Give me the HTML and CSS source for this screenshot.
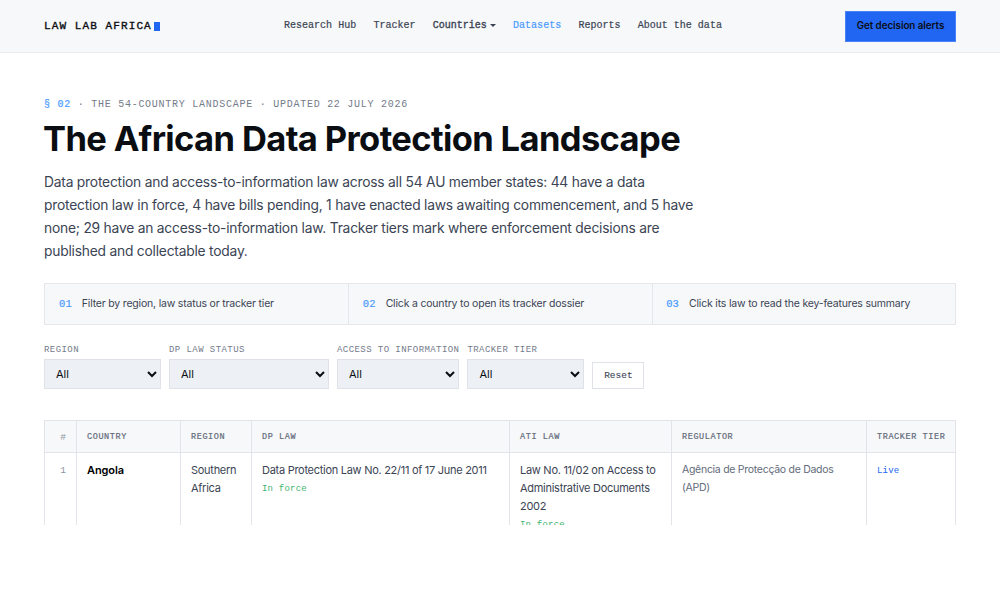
FILE: index.html
```html
<!DOCTYPE html>
<html lang="en">
<head>
    <meta charset="UTF-8">
    <title>The African Data Protection Landscape</title>
    <link rel="stylesheet" href="styles.css">
</head>
<body>
    <header class="site-header">
        <a class="brand" href="#">LAW LAB AFRICA<span class="brand-mark"></span></a>
        <nav class="site-nav">
            <a href="#">Research Hub</a>
            <a href="#">Tracker</a>
            <a class="has-menu" href="#">Countries<span class="caret"></span></a>
            <a class="active" href="#">Datasets</a>
            <a href="#">Reports</a>
            <a href="#">About the data</a>
        </nav>
        <a class="cta" href="#">Get decision alerts</a>
    </header>

    <main>
        <p class="eyebrow"><span>§ 02</span> · THE 54-COUNTRY LANDSCAPE · UPDATED 22 JULY 2026</p>
        <h1>The African Data Protection Landscape</h1>
        <p class="lead">
            Data protection and access-to-information law across all 54 AU member states: 44 have a data<br>
            protection law in force, 4 have bills pending, 1 have enacted laws awaiting commencement, and 5 have<br>
            none; 29 have an access-to-information law. Tracker tiers mark where enforcement decisions are<br>
            published and collectable today.
        </p>

        <div class="steps">
            <div class="step"><span class="num">01</span><span>Filter by region, law status or tracker tier</span></div>
            <div class="step"><span class="num">02</span><span>Click a country to open its tracker dossier</span></div>
            <div class="step"><span class="num">03</span><span>Click its law to read the key-features summary</span></div>
        </div>

        <form class="filters">
            <label class="filter region">REGION
                <select><option>All</option></select>
            </label>
            <label class="filter status">DP LAW STATUS
                <select><option>All</option></select>
            </label>
            <label class="filter access">ACCESS TO INFORMATION
                <select><option>All</option></select>
            </label>
            <label class="filter tier">TRACKER TIER
                <select><option>All</option></select>
            </label>
            <button type="reset">Reset</button>
        </form>

        <div class="table-wrap">
            <table>
                <colgroup>
                    <col class="c-num"><col class="c-country"><col class="c-region"><col class="c-dp"><col class="c-ati"><col class="c-reg"><col class="c-tier">
                </colgroup>
                <thead>
                    <tr>
                        <th class="idx">#</th>
                        <th>COUNTRY</th>
                        <th>REGION</th>
                        <th>DP LAW</th>
                        <th>ATI LAW</th>
                        <th>REGULATOR</th>
                        <th>TRACKER TIER</th>
                    </tr>
                </thead>
                <tbody>
                    <tr>
                        <td class="idx">1</td>
                        <td class="country">Angola</td>
                        <td>Southern Africa</td>
                        <td>Data Protection Law No. 22/11 of 17 June 2011<span class="in-force">In force</span></td>
                        <td>Law No. 11/02 on Access to<br>Administrative Documents<br>2002<span class="in-force">In force</span></td>
                        <td class="regulator">Agência de Protecção de Dados<br>(APD)</td>
                        <td class="live">Live</td>
                    </tr>
                </tbody>
            </table>
        </div>
    </main>
</body>
</html>
```
FILE: styles.css
```css
* { box-sizing: border-box; }
body {
    font-family: Inter, 'Liberation Sans', sans-serif;
    margin: 0;
    background: #fff;
    color: #3b4454;
}
a { color: inherit; text-decoration: none; }
.brand, .site-nav, .eyebrow, .num, .filter, button, th, .idx, .in-force, .live {
    font-family: 'Liberation Mono', monospace;
}
.site-header {
    display: flex;
    align-items: center;
    height: 53px;
    padding: 0 44px;
    background: #f7f8fa;
    border-bottom: 1px solid #e9ebef;
}
.brand {
    display: flex;
    align-items: center;
    width: 240px;
    color: #0a0d12;
    font-size: 11px;
    letter-spacing: 1.1px;
    -webkit-text-stroke: 0.35px;
}
.brand-mark {
    width: 6px;
    height: 9px;
    margin-left: 2.5px;
    background: #2166f3;
}
.site-nav {
    display: flex;
    gap: 17.2px;
    margin-top: -1px;
    font-size: 10px;
    letter-spacing: 0.015px;
    white-space: nowrap;
    -webkit-text-stroke: 0.2px;
}
.has-menu { display: flex; align-items: center; -webkit-text-stroke: 0.35px; }
.caret {
    margin-left: 3px;
    border: 3px solid transparent;
    border-top: 3px solid #3b4454;
    border-bottom: 0;
}
.active { color: #4a9aff; }
.cta {
    width: 111px;
    height: 31px;
    margin-left: auto;
    background: #2166f3;
    border: 1px solid #4a83f5;
    color: #0a0d12;
    font-size: 9.8px;
    font-weight: 600;
    line-height: 28px;
    text-align: center;
    white-space: nowrap;
    letter-spacing: -0.05px;
}

main { padding: 45px 44px 0; }
.eyebrow {
    margin: 0;
    color: #747b8a;
    font-size: 10px;
    line-height: 14px;
    letter-spacing: 0.74px;
}
.eyebrow span, .num { color: #4a9aff; -webkit-text-stroke: 0.2px; }
h1 {
    margin: 6px 0 0 -1px;
    color: #0a0d12;
    font-size: 34.5px;
    font-weight: 650;
    line-height: 42px;
    letter-spacing: -0.62px;
    white-space: nowrap;
}
.lead {
    margin: 11px 0 19.5px;
    font-size: 13.8px;
    line-height: 23.1px;
    letter-spacing: -0.21px;
    white-space: nowrap;
}

.steps {
    display: grid;
    grid-template-columns: repeat(3, 1fr);
    height: 42px;
    background: #f7f8fa;
    border: 1px solid #e5e7eb;
}
.step {
    display: flex;
    align-items: center;
    gap: 10px;
    padding-left: 14px;
    font-size: 10.5px;
    letter-spacing: -0.19px;
    white-space: nowrap;
}
.step + .step { padding-left: 13.5px; border-left: 1px solid #e5e7eb; }
.num { font-size: 10.5px; letter-spacing: 0.1px; }

.filters {
    display: flex;
    align-items: flex-end;
    gap: 8px;
    margin-top: 18px;
}
.filter {
    display: flex;
    flex-direction: column;
    gap: 3px;
    color: #747b8a;
    font-size: 9px;
    line-height: 12px;
    letter-spacing: 0.43px;
    white-space: nowrap;
}
.filters { margin-top: 19px; }
.region { width: 117px; }
.status { width: 160px; }
.access { width: 122.4px; }
.tier { width: 117px; }
select {
    width: 100%;
    height: 30px;
    padding: 0 0 0 7px;
    background: #edf0f5;
    border: 1px solid #dfe2e8;
    border-radius: 0;
    color: #0a0d12;
    font-family: Inter, sans-serif;
    font-size: 11px;
}
button {
    width: 52px;
    height: 27px;
    padding: 0;
    background: #fff;
    border: 1px solid #dfe2e8;
    color: #3b4454;
    font-size: 9.5px;
    -webkit-text-stroke: 0.1px;
}

/* only the top of the list shows */
.table-wrap {
    height: 105px;
    margin-top: 31px;
    overflow: hidden;
}
table {
    width: 911.5px;
    table-layout: fixed;
    border-collapse: collapse;
    border: 1px solid #e2e4e9;
}
.c-num { width: 32px; }
.c-country { width: 104px; }
.c-region { width: 71px; }
.c-dp { width: 258px; }
.c-ati { width: 162px; }
.c-reg { width: 195px; }
.c-tier { width: 89px; }
th {
    height: 32px;
    padding: 2px 0 0 10px;
    background: #f7f8fa;
    border: 1px solid #e2e4e9;
    color: #636b7b;
    font-size: 8.5px;
    font-weight: normal;
    text-align: left;
    letter-spacing: 0.6px;
    white-space: nowrap;
    -webkit-text-stroke: 0.2px;
}
td {
    padding: 8px 0 10px 10px;
    border: 1px solid #e2e4e9;
    font-size: 11px;
    line-height: 18px;
    letter-spacing: -0.28px;
    vertical-align: top;
}
th.idx, td.idx {
    padding-right: 10px;
    padding-left: 0;
    color: #8d94a1;
    font-size: 9.5px;
    font-weight: normal;
    text-align: right;
    letter-spacing: 0;
    -webkit-text-stroke: 0;
}
td.idx, td.live { padding-top: 9px; }
.country { color: #000; font-weight: 600; letter-spacing: -0.1px; }
.in-force {
    display: block;
    margin-top: 1px;
    color: #3fb66f;
    font-size: 9px;
    letter-spacing: 0.22px;
}
.regulator { color: #636b7b; font-size: 10.5px; letter-spacing: -0.28px; }
.live { color: #2166f3; font-size: 9px; letter-spacing: 0.22px; }
```
